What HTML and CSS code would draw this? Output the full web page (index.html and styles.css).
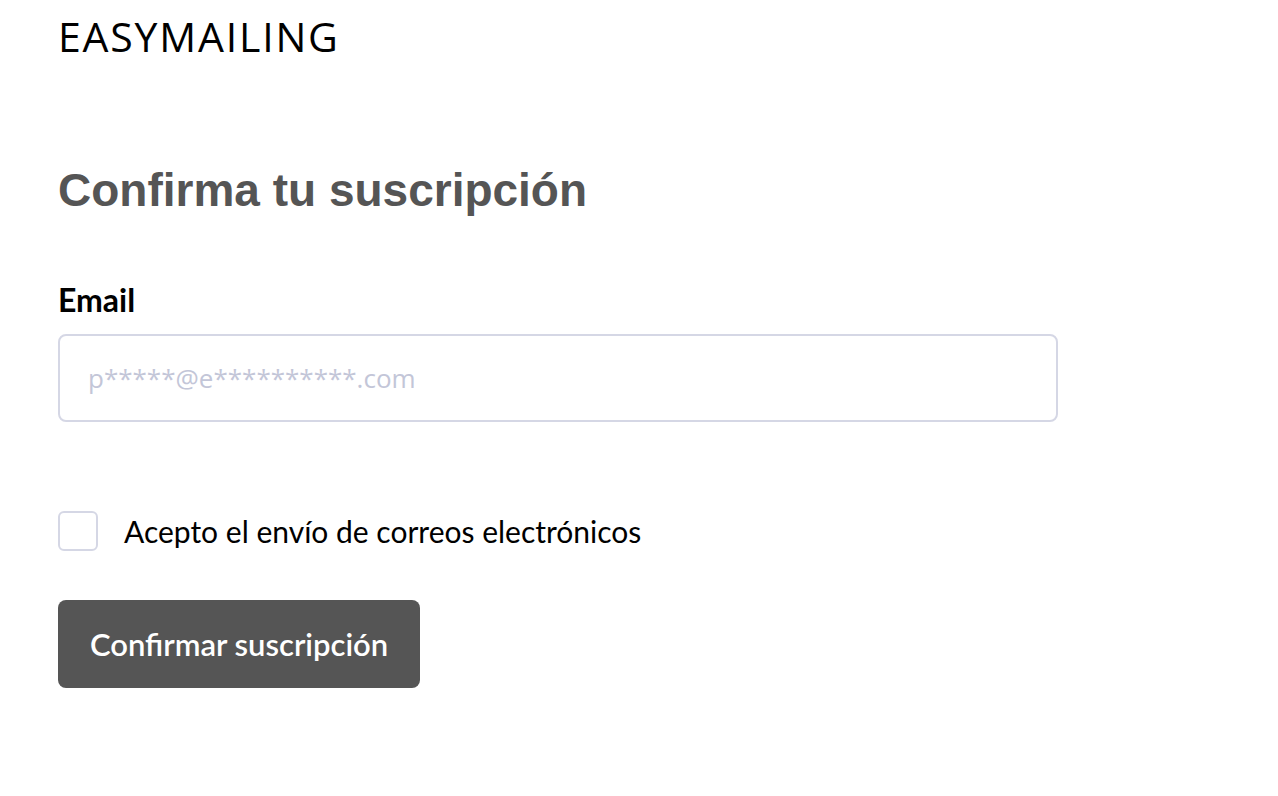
FILE: index.html
```html
<!DOCTYPE html>
<html lang="es">
<head>
    <meta charset="UTF-8">
    <meta name="viewport" content="width=device-width, initial-scale=1.0">
    <title>Confirma tu suscripción</title>
    <link rel="stylesheet" href="styles.css">
</head>
<body>
    <div class="page">
        <div class="logo">EASYMAILING</div>

        <h1 class="title">Confirma tu suscripción</h1>

        <form class="form" onsubmit="return false">
            <label class="label" for="email">Email</label>
            <input class="input" type="email" id="email" placeholder="p*****@e**********.com">

            <label class="check-row">
                <input type="checkbox" class="check">
                <span class="box"></span>
                <span class="check-text">Acepto el envío de correos electrónicos</span>
            </label>

            <button class="submit" type="submit">Confirmar suscripción</button>
        </form>
    </div>
</body>
</html>
```

FILE: styles.css
```css
body {
    margin: 0;
    background: #fff;
    font-family: "Source Sans Pro", Lato, "Noto Sans", sans-serif;
    color: #000;
}
.page {
    padding: 10px 58px;
}
.logo {
    font-family: "Open Sans", "Noto Sans", sans-serif;
    font-size: 41px;
    line-height: 52px;
    letter-spacing: 1.8px;
}
.title {
    font-family: "Liberation Sans", Arial, sans-serif;
    font-size: 46px;
    font-weight: bold;
    color: #555;
    margin: 102px 0 0;
    line-height: 52px;
}
.form {
    display: flex;
    flex-direction: column;
    align-items: flex-start;
    margin-top: 66px;
}
.label {
    font-size: 32px;
    font-weight: bold;
    line-height: 36px;
    margin-bottom: 16px;
}
.input {
    box-sizing: border-box;
    width: 1000px;
    height: 88px;
    border: 2px solid #d5d7e5;
    border-radius: 8px;
    padding: 0 28px;
    font-family: "Open Sans", "Noto Sans", sans-serif;
    font-size: 26px;
    outline: none;
}
.input::placeholder {
    color: #c3c6d8;
}
.check-row {
    display: flex;
    align-items: center;
    gap: 26px;
    margin-top: 89px;
    cursor: pointer;
}
.check {
    display: none;
}
.box {
    box-sizing: border-box;
    width: 40px;
    height: 40px;
    border: 2px solid #d5d7e5;
    border-radius: 6px;
}
.check:checked + .box {
    background: #555;
    border-color: #555;
}
.check-text {
    font-size: 30px;
    line-height: 40px;
}
.submit {
    margin-top: 49px;
    height: 88px;
    padding: 0 32px;
    border: none;
    border-radius: 8px;
    background: #555;
    color: #fff;
    font-family: "Source Sans Pro", Lato, "Noto Sans", sans-serif;
    font-size: 31px;
    font-weight: 600;
    cursor: pointer;
}
```
